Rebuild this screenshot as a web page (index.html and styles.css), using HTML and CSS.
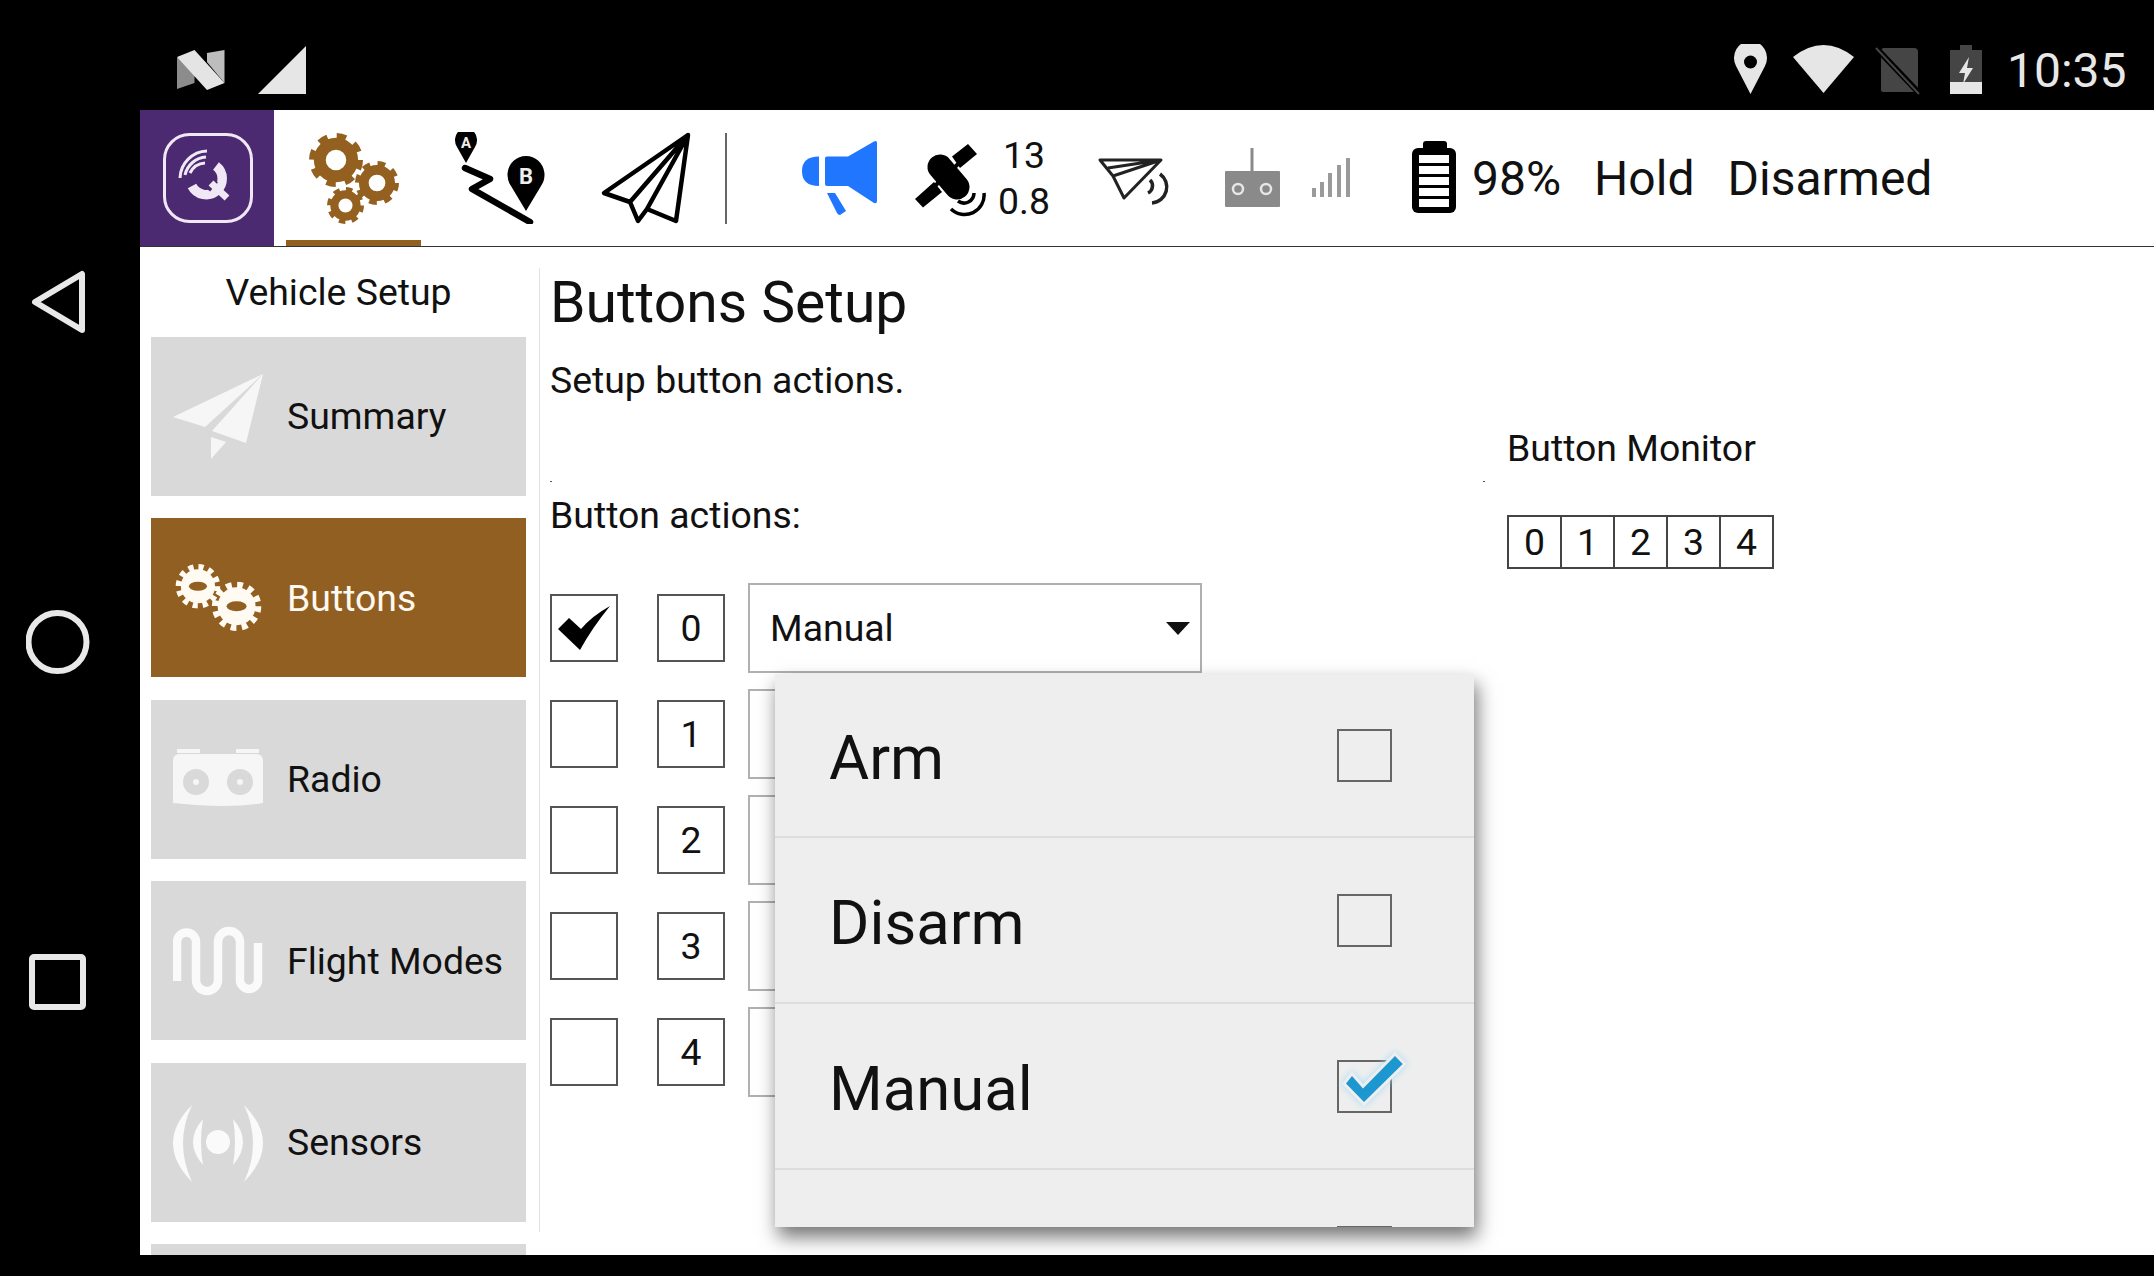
FILE: index.html
```html
<!DOCTYPE html>
<html>

<head>
    <meta charset="utf-8">
    <title>Buttons Setup</title>
    <link rel="stylesheet" href="styles.css">
</head>

<body>
    <svg class="defs">
        <symbol id="gear8" viewBox="0 0 100 100">
            <circle cx="50" cy="50" r="30" fill="none" stroke="currentColor" stroke-width="22" />
            <circle cx="50" cy="50" r="43" fill="none" stroke="currentColor" stroke-width="14" stroke-dasharray="17 16.77" />
        </symbol>
        <symbol id="gear12" viewBox="0 0 100 100">
            <circle cx="50" cy="50" r="38" fill="currentColor" />
            <circle cx="50" cy="50" r="43" fill="none" stroke="currentColor" stroke-width="13" stroke-dasharray="11.5 11" />
            <ellipse cx="50" cy="50" rx="20" ry="10" fill="#925f22" />
        </symbol>
    </svg>

    <div class="screen">
        <!-- android status bar -->
        <div class="statusbar">
            <svg viewBox="175 48 52 44" width="52" height="44">
                <path d="M177 58L194.500 53V83L177 89Z" fill="#8c8c8c" />
                <path d="M207 53L224.500 50V83L207 62Z" fill="#bdbdbd" />
                <path d="M177 57L194.500 50L224.500 83L207 90Z" fill="#e4e4e4" />
            </svg>
            <svg class="st-signal" viewBox="256 44 52 52" width="52" height="52">
                <path d="M306 46V94H258Z" fill="#e6e6e6" />
            </svg>
            <svg class="st-pin" viewBox="1732 44 37 52" width="37" height="52">
                <path d="M1750.500 94L1736 66A16.500 17 0 1 1 1765 66Z" fill="#e6e6e6" />
                <circle cx="1750.500" cy="62" r="6.500" fill="#000" />
            </svg>
            <svg class="st-wifi" viewBox="1791 44 65 52" width="65" height="52">
                <path d="M1823.500 93L1793 57Q1823.500 33 1854 57Z" fill="#e6e6e6" />
            </svg>
            <svg class="st-sim" viewBox="1874 46 48 50" width="48" height="50">
                <path d="M1884 48H1914Q1918 48 1918 52V90Q1918 92 1914 92H1884Q1881 92 1881 90V52Q1881 48 1884 48Z" fill="#454545" />
                <path d="M1877 49L1919 93" stroke="#000" stroke-width="6" />
                <path d="M1876 48L1919 94" stroke="#454545" stroke-width="2" />
            </svg>
            <svg class="st-batt" viewBox="1948 44 36 52" width="36" height="52">
                <path d="M1960 45H1972V50H1982V82H1950V50H1960Z" fill="#454545" />
                <path d="M1950 82H1982V94H1950Z" fill="#e6e6e6" />
                <path d="M1969 57L1959 73H1965L1963 84L1973 68H1967Z" fill="#e6e6e6" />
            </svg>
            <span class="st-time">10:35</span>
        </div>

        <div class="middle">
            <!-- android nav bar -->
            <div class="navbar">
                <svg viewBox="26 270 64 64" width="64" height="64">
                    <path d="M82 274V330L35 302Z" class="nav-shape" />
                </svg>
                <svg viewBox="26 610 64 64" width="64" height="64">
                    <circle cx="57.500" cy="642" r="29" class="nav-shape" />
                </svg>
                <svg viewBox="26 950 64 64" width="64" height="64">
                    <rect x="32" y="957" width="51" height="50" rx="2" class="nav-shape" />
                </svg>
            </div>

            <div class="app">
                <div class="toolbar">
                    <div class="brand">
                        <svg viewBox="0 0 134 136" width="134" height="136">
                            <rect x="24.500" y="24.500" width="87" height="87" rx="25" fill="none" stroke="#f1e8f5" stroke-width="3" />
                            <g fill="none" stroke="#f1e8f5">
                                <path d="M52 76A16 16 0 1 0 76 56" stroke-width="9.500" />
                                <path d="M40 68A28 28 0 0 1 67 41" stroke-width="3" />
                                <path d="M45 65A23 23 0 0 1 66 47" stroke-width="3" />
                                <path d="M50 63A18 18 0 0 1 65 53" stroke-width="3" />
                                <path d="M66 70L74 77" stroke="#4c2a72" stroke-width="12" />
                                <path d="M71 73L87 88" stroke-width="7" />
                            </g>
                        </svg>
                    </div>
                    <div class="tab">
                        <svg viewBox="306 132 94 94" width="94" height="94">
                            <use href="#gear8" x="308" y="134" width="54" height="54" />
                            <use href="#gear8" x="354" y="162" width="44" height="44" />
                            <use href="#gear8" x="326" y="188" width="37" height="37" />
                        </svg>
                    </div>
                    <svg class="tb-route" viewBox="454 133 92 92" width="92" height="92">
                        <path d="M466 164L457 148A11 12 0 1 1 475 148Z" />
                        <path d="M526 212L511 187A18.500 19 0 1 1 541 187Z" />
                        <path d="M465 169L490 180L472 190L530 223" fill="none" stroke="#000" stroke-width="6.500" stroke-linecap="round" stroke-linejoin="round" />
                        <text x="466" y="149" class="pin-a">A</text>
                        <text x="526" y="185" class="pin-b">B</text>
                    </svg>
                    <svg class="tb-plane" viewBox="600 133 94 92" width="94" height="92">
                        <path d="M688 136L604 194L630 203L638 222L647 210L676 222ZM688 136L630 203M688 136L647 210" fill="none" stroke="#000" stroke-width="4.500" stroke-linejoin="round" />
                    </svg>
                    <div class="tb-sep"></div>
                    <svg class="tb-mega" viewBox="800 140 80 78" width="80" height="78">
                        <path d="M819 157.500V187Q802 187 802 172Q802 157.500 819 157.500Z" />
                        <path d="M825 159Q825 157.500 827 157.500H848L874 142.500Q877 141 877 144V202Q877 205 874 204L848 187H827Q825 187 825 185Z" />
                        <path d="M827 194H835L846 212L840 216Q838 216 837 214Z" />
                    </svg>
                    <svg class="tb-sat" viewBox="913 141 74 77" width="74" height="77">
                        <path d="M952 157.500L968 145L977 155L960 169Z" />
                        <path d="M915 200L934 183L942 193L923 208.500Z" />
                        <path d="M940 168L957 188" stroke="#000" stroke-width="25" stroke-linecap="round" />
                        <path d="M934 188L944 178M950 173L958 165" stroke="#000" stroke-width="4" />
                        <path d="M978 196A17 17 0 0 1 954 210" fill="none" stroke="#fff" stroke-width="6" />
                        <path d="M984 194A19.500 19.500 0 0 1 951 210M974 194A10 10 0 0 1 958 202" fill="none" stroke="#000" stroke-width="3.500" />
                    </svg>
                    <div class="tb-gps"><span>13</span><span>0.8</span></div>
                    <svg class="tb-mini" viewBox="1097 156 78 50" width="78" height="50">
                        <path d="M1100 160H1161L1124 198L1113 176ZM1161 160L1108 168M1161 160L1113 176" fill="none" stroke="#222" stroke-width="3" stroke-linejoin="round" />
                        <path d="M1160 174A16 16 0 0 1 1152 203M1150 180A8 8 0 0 1 1148 193" fill="none" stroke="#222" stroke-width="3.500" />
                    </svg>
                    <svg class="tb-rc" viewBox="1225 146 55 61" width="55" height="61">
                        <path d="M1250.500 147H1253.500V170H1250.500Z" fill="#8a8a8a" />
                        <rect x="1225" y="170" width="55" height="36" rx="1" fill="#8a8a8a" />
                        <circle cx="1238" cy="188" r="5" fill="none" stroke="#e6e6e6" stroke-width="2.500" />
                        <circle cx="1266" cy="188" r="5" fill="none" stroke="#e6e6e6" stroke-width="2.500" />
                    </svg>
                    <svg class="tb-bars" viewBox="1312 156 38 42" width="38" height="42">
                        <rect x="1312" y="188" width="4" height="9" />
                        <rect x="1320" y="182" width="4" height="15" />
                        <rect x="1328" y="173" width="4" height="24" />
                        <rect x="1337" y="165" width="4" height="32" />
                        <rect x="1346" y="158" width="4" height="39" />
                    </svg>
                    <svg class="tb-batt" viewBox="1412 140 44 74" width="44" height="74">
                        <path d="M1423 149V144Q1423 141 1426 141H1444Q1447 141 1447 144V149Z" />
                        <rect x="1412" y="148" width="44" height="65" rx="6" />
                        <g fill="#fff">
                            <rect x="1419" y="155" width="30" height="8" />
                            <rect x="1419" y="166" width="30" height="8" />
                            <rect x="1419" y="177" width="30" height="8" />
                            <rect x="1419" y="188" width="30" height="8" />
                            <rect x="1419" y="199" width="30" height="8" />
                        </g>
                    </svg>
                    <span class="tb-text tb-pct">98%</span>
                    <span class="tb-text tb-mode">Hold</span>
                    <span class="tb-text tb-armed">Disarmed</span>
                </div>

                <div class="content">
                    <div class="sidebar">
                        <div class="sidebar-title">Vehicle Setup</div>
                        <div class="side-item">
                            <svg class="side-icon" viewBox="173 375 90 85" width="90" height="85">
                                <path d="M263 375L173 418L205 428Z" />
                                <path d="M263 375L212 432L246 444Z" />
                                <path d="M211 438L226 443L211 460Z" />
                            </svg>
                            <span>Summary</span>
                        </div>
                        <div class="side-item active">
                            <svg class="side-icon" viewBox="173 562 92 72" width="90" height="72">
                                <use href="#gear12" x="174" y="563" width="49" height="46" />
                                <use href="#gear12" x="212" y="581" width="52" height="51" />
                            </svg>
                            <span>Buttons</span>
                        </div>
                        <div class="side-item">
                            <svg class="side-icon" viewBox="173 750 90 60" width="90" height="60">
                                <path d="M177 750H200V754H177ZM236 750H259V754H236Z" />
                                <path d="M180 755H256Q263 755 263 762V804Q230 810 173 804V762Q173 755 180 755Z" />
                                <circle cx="196" cy="783" r="13" fill="#d9d9d9" />
                                <circle cx="240" cy="783" r="13" fill="#d9d9d9" />
                                <circle cx="196" cy="783" r="3" />
                                <circle cx="240" cy="783" r="3" />
                            </svg>
                            <span>Radio</span>
                        </div>
                        <div class="side-item">
                            <svg class="side-icon" viewBox="0 0 90 70" width="90" height="70">
                                <path d="M4 55V16a9.500 9.500 0 0 1 19 0V54a11 11 0 0 0 22 0V16a11 11 0 0 1 22 0V54a9 9 0 0 0 18 0V17" fill="none" stroke="#fafafa" stroke-width="8.500" />
                            </svg>
                            <span>Flight Modes</span>
                        </div>
                        <div class="side-item">
                            <svg class="side-icon sensors-icon" viewBox="0 0 90 77" width="90" height="77">
                                <path d="M19 0Q-19 38 19 77Q1 38 19 0ZM30 14Q10 37 30 60Q26 37 30 14Z" />
                                <path d="M71 0Q109 38 71 77Q89 38 71 0ZM60 14Q80 37 60 60Q64 37 60 14Z" />
                                <circle cx="45" cy="37" r="12" />
                            </svg>
                            <span>Sensors</span>
                        </div>
                        <div class="side-item"></div>
                    </div>
                    <div class="divider"></div>

                    <div class="main">
                        <div class="setup">
                            <h1 class="title">Buttons Setup</h1>
                            <p class="line desc">Setup button actions.</p>
                            <p class="line actions-label">Button actions:</p>
                            <div class="rows">
                                <div class="row">
                                    <div class="box">
                                        <svg viewBox="552 596 64 64" width="64" height="64">
                                            <path d="M558 629L569 618L581 629Q592 616 610 606Q592 628 580 650Z" />
                                        </svg>
                                    </div>
                                    <div class="box num">0</div>
                                    <div class="combo">Manual<span class="caret"></span></div>
                                </div>
                                <div class="row">
                                    <div class="box"></div>
                                    <div class="box num">1</div>
                                    <div class="combo"></div>
                                </div>
                                <div class="row">
                                    <div class="box"></div>
                                    <div class="box num">2</div>
                                    <div class="combo"></div>
                                </div>
                                <div class="row">
                                    <div class="box"></div>
                                    <div class="box num">3</div>
                                    <div class="combo"></div>
                                </div>
                                <div class="row">
                                    <div class="box"></div>
                                    <div class="box num">4</div>
                                    <div class="combo"></div>
                                </div>
                            </div>
                        </div>

                        <div class="monitor">
                            <div class="line monitor-label">Button Monitor</div>
                            <div class="cells">
                                <div class="cell">0</div>
                                <div class="cell">1</div>
                                <div class="cell">2</div>
                                <div class="cell">3</div>
                                <div class="cell">4</div>
                            </div>
                        </div>

                        <!-- dropdown popup -->
                        <div class="menu">
                            <div class="menu-item"><span>Arm</span><div class="menu-box"></div></div>
                            <div class="menu-item"><span>Disarm</span><div class="menu-box"></div></div>
                            <div class="menu-item">
                                <span>Manual</span>
                                <div class="menu-box">
                                    <svg class="menu-tick" viewBox="1340 1050 70 58" width="70" height="58">
                                        <path d="M1346 1083.500L1352 1076L1363 1088.500L1395 1056L1402.700 1064L1364 1102Z" />
                                    </svg>
                                </div>
                            </div>
                            <div class="menu-item"><span></span><div class="menu-box"></div></div>
                        </div>
                    </div>
                </div>
            </div>
        </div>
    </div>
</body>

</html>
```

FILE: styles.css
```css
* {
    margin: 0;
    padding: 0;
    box-sizing: border-box;
}

html,
body {
    width: 2154px;
    height: 1276px;
    overflow: hidden;
    background-color: #000;
}

body {
    font-family: Roboto, "Liberation Sans", sans-serif;
    color: #111;
}

svg {
    display: block;
    flex: none;
}

.defs {
    display: none;
}

.screen {
    height: 1276px;
    padding-bottom: 21px;
    display: flex;
    flex-direction: column;
}

/* status bar */
.statusbar {
    height: 110px;
    flex: none;
    padding: 30px 0 0 175px;
    display: flex;
    align-items: center;
    color: #e8e8e8;
}

.st-signal {
    margin-left: 29px;
}

.st-pin {
    margin-left: 1424px;
}

.st-wifi {
    margin-left: 22px;
}

.st-sim {
    margin-left: 18px;
    margin-top: 2px;
}

.st-batt {
    margin-left: 26px;
}

.st-time {
    margin-left: 23px;
    margin-top: 2px;
    font-size: 48px;
    line-height: 56px;
}

.middle {
    flex: 1;
    min-height: 0;
    display: flex;
}

/* nav bar */
.navbar {
    width: 140px;
    flex: none;
    padding: 160px 0 0 26px;
    display: flex;
    flex-direction: column;
    gap: 276px;
}

.nav-shape {
    fill: none;
    stroke: #e8e8e8;
    stroke-width: 6;
    stroke-linejoin: round;
}

.app {
    flex: 1;
    min-width: 0;
    background-color: #fff;
    display: flex;
    flex-direction: column;
}

/* toolbar */
.toolbar {
    height: 137px;
    flex: none;
    border-bottom: 1px solid #333;
    display: flex;
    align-items: center;
}

.brand {
    width: 134px;
    align-self: stretch;
    flex: none;
    background-color: #4c2a72;
}

.tab {
    width: 135px;
    margin-left: 12px;
    align-self: stretch;
    flex: none;
    border-bottom: 6px solid #93601f;
    display: flex;
    align-items: center;
    justify-content: center;
    color: #93601f;
    padding-top: 6px;
}

.tb-route {
    margin-left: 33px;
    margin-bottom: 1px;
}

.pin-a,
.pin-b {
    fill: #eee;
    font-weight: 700;
    text-anchor: middle;
}

.pin-a {
    font-size: 15px;
}

.pin-b {
    font-size: 22px;
}

.tb-plane {
    margin-left: 54px;
}

.tb-sep {
    width: 2px;
    height: 91px;
    margin-left: 31px;
    background-color: #666;
}

.tb-mega {
    margin-left: 73px;
    fill: #2076ff;
}

.tb-sat {
    margin-left: 33px;
    margin-top: 1px;
}

.tb-gps {
    width: 48px;
    margin-left: 13px;
    display: flex;
    flex-direction: column;
    align-items: center;
    font-size: 37.4px;
    line-height: 46px;
}

.tb-mini {
    margin-left: 49px;
    margin-top: 6px;
}

.tb-rc {
    margin-left: 50px;
    margin-top: -2px;
}

.tb-bars {
    margin-left: 32px;
    margin-top: -2px;
    fill: #9a9a9a;
}

.tb-batt {
    margin-left: 62px;
    margin-top: -2px;
}

.tb-text {
    font-size: 48px;
    line-height: 56px;
    white-space: nowrap;
    margin-top: 1px;
}

.tb-pct {
    margin-left: 16px;
}

.tb-mode {
    margin-left: 33px;
}

.tb-armed {
    margin-left: 33px;
}

/* content */
.content {
    flex: 1;
    min-height: 0;
    overflow: hidden;
    display: flex;
}

.sidebar {
    width: 399px;
    flex: none;
    padding: 23px 13px 0 11px;
    display: flex;
    flex-direction: column;
    gap: 22.5px;
}

.sidebar-title {
    flex: none;
    text-align: center;
    font-size: 37.4px;
    line-height: 44px;
}

.side-item {
    height: 159px;
    flex: none;
    background-color: #d9d9d9;
    padding-left: 22px;
    display: flex;
    align-items: center;
    gap: 24px;
    font-size: 37.4px;
    fill: #f6f6f6;
}

.side-item.active {
    background-color: #925f22;
    color: #fdf8f0;
}

.side-item.active .side-icon {
    color: #fffaf2;
}

.sensors-icon {
    margin-top: 3px;
    fill: #fafafa;
}

.divider {
    width: 1px;
    flex: none;
    margin: 21px 0 23px;
    background-color: #e2e2e2;
}

.main {
    flex: 1;
    min-width: 0;
    position: relative;
    padding: 28px 0 0 10px;
    display: flex;
}

/* the two stray pixels above the action list */
.main::before,
.main::after {
    content: "";
    position: absolute;
    top: 234px;
    width: 2px;
    height: 1px;
    background-color: #555;
}

.main::before {
    left: 10px;
}

.main::after {
    left: 943px;
}

.setup {
    width: 957px;
    flex: none;
}

.title {
    font-size: 57px;
    font-weight: 400;
    line-height: 56px;
}

.line {
    font-size: 37.4px;
    line-height: 44px;
}

.desc {
    margin-top: 27px;
}

.actions-label {
    margin-top: 91px;
}

.rows {
    margin-top: 46px;
    display: flex;
    flex-direction: column;
    gap: 16px;
}

.row {
    height: 90px;
    display: flex;
    align-items: center;
}

.box {
    width: 68px;
    height: 68px;
    flex: none;
    border: 2px solid #555;
}

.num {
    margin-left: 39px;
    display: flex;
    align-items: center;
    justify-content: center;
    font-size: 37.4px;
}

.combo {
    width: 454px;
    height: 90px;
    margin-left: 23px;
    padding: 0 10px 0 20px;
    border: 2px solid #b0b0b0;
    display: flex;
    align-items: center;
    justify-content: space-between;
    font-size: 37.4px;
}

.caret {
    border-top: 13px solid #111;
    border-left: 12px solid transparent;
    border-right: 12px solid transparent;
}

.monitor-label {
    margin-top: 151px;
}

.cells {
    margin-top: 45px;
    display: flex;
}

.cell {
    width: 55px;
    height: 54px;
    margin-right: -2px;
    border: 2px solid #444;
    display: flex;
    align-items: center;
    justify-content: center;
    font-size: 37.4px;
}

/* popup */
.menu {
    position: absolute;
    left: 235px;
    top: 427px;
    width: 699px;
    height: 553px;
    background-color: #eee;
    box-shadow: 3px 10px 18px rgba(0, 0, 0, 0.55);
    overflow: hidden;
}

.menu-item {
    height: 166px;
    padding: 0 82px 0 54px;
    border-bottom: 2px solid #ddd;
    display: flex;
    align-items: center;
    justify-content: space-between;
    font-size: 61.6px;
}

.menu-item:first-child {
    height: 164px;
}

.menu-item span {
    margin-top: 5px;
}

.menu-box {
    position: relative;
    width: 55px;
    height: 53px;
    flex: none;
    border: 2px solid #666;
}

.menu-tick {
    position: absolute;
    left: 1px;
    top: -12px;
    overflow: visible;
    fill: #1d97cf;
    stroke: #eee;
    stroke-width: 6;
    paint-order: stroke;
    filter: drop-shadow(0 0 3px #a5dcf5);
}
```
